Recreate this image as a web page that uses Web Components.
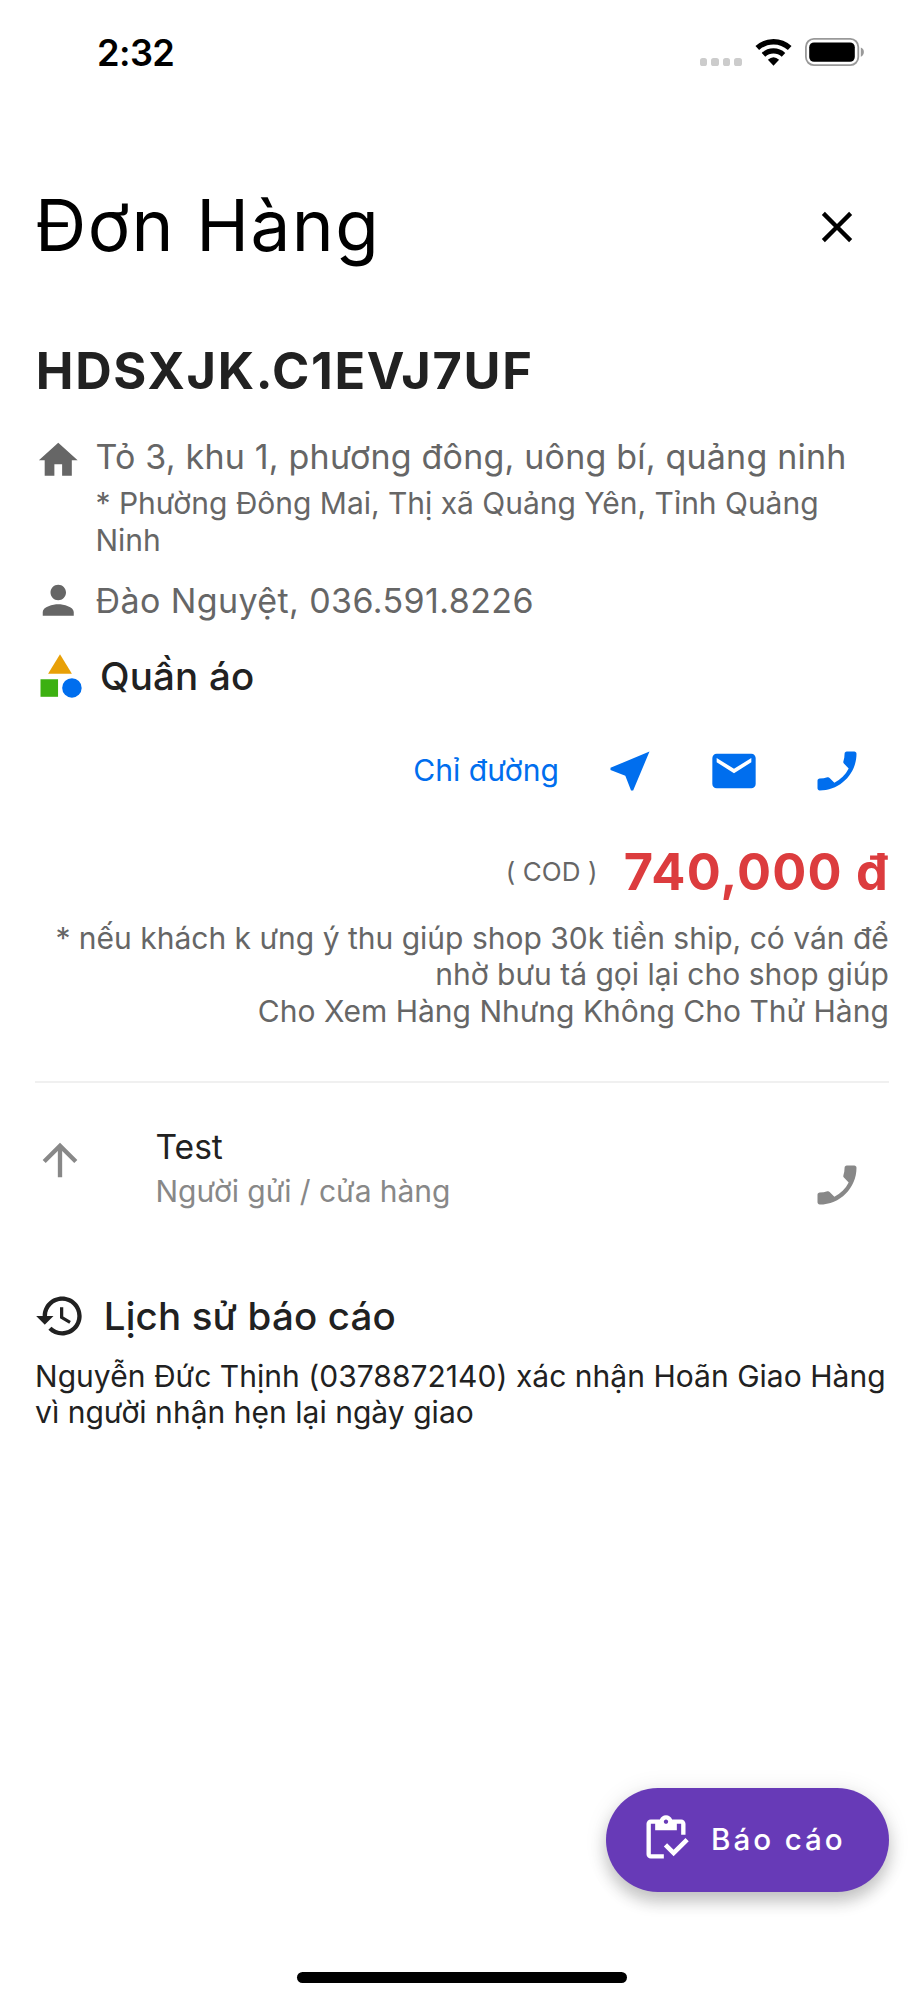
<!DOCTYPE html>
<html lang="vi">
<head>
<meta charset="utf-8">
<title>Đơn Hàng</title>
<style>
html, body { margin: 0; background: #fff; }
body { font-family: Inter, "Noto Sans", sans-serif; color: #212121; }
</style>
</head>
<body>
<order-screen></order-screen>

<script>
const ICONS = {
  close: '<path d="M19 6.41 17.59 5 12 10.59 6.41 5 5 6.41 10.59 12 5 17.59 6.41 19 12 13.41 17.59 19 19 17.59 13.41 12z"/>',
  home: '<path d="M10 20v-6h4v6h5v-8h3L12 3 2 12h3v8z"/>',
  person: '<path d="M12 12c2.21 0 4-1.79 4-4s-1.79-4-4-4-4 1.79-4 4 1.79 4 4 4zm0 2c-2.67 0-8 1.34-8 4v2h16v-2c0-2.66-5.33-4-8-4z"/>',
  category: '<path fill="#e8a007" d="m12 2-5.5 9h11z"/><path fill="#3cb011" d="M3 13.5h8.1v8.1H3z"/><circle fill="#006eee" cx="17.5" cy="17.5" r="4.5"/>',
  near: '<path d="M21 3 3 10.53v.98l6.84 2.65L12.48 21h.98L21 3z"/>',
  mail: '<path d="M20 4H4c-1.1 0-1.99.9-1.99 2L2 18c0 1.1.9 2 2 2h16c1.1 0 2-.9 2-2V6c0-1.1-.9-2-2-2zm0 4-8 5-8-5V6l8 5 8-5v2z"/>',
  phone: '<path transform="matrix(-1 0 0 1 24 0)" d="M6.62 10.79c1.44 2.83 3.76 5.14 6.59 6.59l2.2-2.2c.27-.27.67-.36 1.02-.24 1.12.37 2.33.57 3.57.57.55 0 1 .45 1 1V20c0 .55-.45 1-1 1-9.39 0-17-7.61-17-17 0-.55.45-1 1-1h3.5c.55 0 1 .45 1 1 0 1.25.2 2.45.57 3.57.11.35.03.74-.25 1.02l-2.2 2.2z"/>',
  up: '<path d="m4 12 1.41 1.41L11 7.83V20h2V7.83l5.58 5.59L20 12l-8-8-8 8z"/>',
  history: '<path d="M13 3c-4.97 0-9 4.03-9 9H1l3.89 3.89.07.14L9 12H6c0-3.87 3.13-7 7-7s7 3.13 7 7-3.13 7-7 7c-1.93 0-3.68-.79-4.94-2.06l-1.42 1.42C8.27 19.99 10.51 21 13 21c4.97 0 9-4.03 9-9s-4.03-9-9-9zm-1 5v5l4.28 2.54.72-1.21-3.5-2.08V8H12z"/>',
  inventory: '<path d="M5 5h2v3h10V5h2v5h2V5c0-1.1-.9-2-2-2h-4.18C14.4 1.84 13.3 1 12 1s-2.4.84-2.82 2H5c-1.1 0-2 .9-2 2v14c0 1.1.9 2 2 2h6v-2H5V5zm7-2c.55 0 1 .45 1 1s-.45 1-1 1-1-.45-1-1 .45-1 1-1z"/><path d="M21 11.5 15.51 17l-3.01-3L11 15.5l4.51 4.5L22.5 13z"/>'
};

const define = (name, render) => customElements.define(name, class extends HTMLElement {
  connectedCallback() {
    if (!this.shadowRoot) this.attachShadow({ mode: 'open' }).innerHTML = render(this);
  }
});

define('m-icon', el => `
<style>
:host { display: block; flex: none; width: var(--icon-size, 52px); height: var(--icon-size, 52px); }
svg { display: block; width: 100%; height: 100%; fill: currentColor; }
</style>
<svg viewBox="0 0 24 24" aria-hidden="true">${ICONS[el.getAttribute('name')]}</svg>`);

define('status-bar', () => `
<style>
:host { display: flex; justify-content: space-between; align-items: flex-start; box-sizing: border-box; height: 150px; padding: 32.7px 58.8px 0 97px; color: #000; }
time { font-size: 36.2px; font-weight: 600; line-height: 40px; letter-spacing: -.6px; }
.signs { display: flex; align-items: flex-end; height: 33.3px; }
.dots { display: flex; gap: 4.3px; }
.dots i { width: 7.3px; height: 7.6px; border-radius: 2.6px; background: #ccc; }
svg { display: block; }
.wifi { margin: 0 13px 0 13.5px; }
</style>
<time>2:32</time>
<div class="signs">
  <div class="dots"><i></i><i></i><i></i><i></i></div>
  <svg class="wifi" width="37" height="27" viewBox="0 0 37 27" fill="none" stroke="#000">
    <path stroke-width="5.4" d="M2.3 9A24 24 0 0 1 34.7 9"/>
    <path stroke-width="5.2" d="M8.5 15.8A14.8 14.8 0 0 1 28.5 15.8"/>
    <path fill="#000" stroke="none" d="M18.5 26.8 12.9 20.8Q18.5 15.6 24.1 20.8Z"/>
  </svg>
  <svg width="60" height="28" viewBox="0 0 60 28">
    <rect x=".9" y=".9" width="52.4" height="26.2" rx="8" fill="none" stroke="#999" stroke-width="1.8"/>
    <rect x="4.2" y="4.4" width="45.6" height="19.4" rx="4.8"/>
    <path fill="#999" d="M55.8 9.4Q58.9 10.8 58.9 14T55.8 18.8Z"/>
  </svg>
</div>`);

define('page-header', () => `
<style>
:host { display: flex; justify-content: space-between; align-items: center; height: 84px; margin-top: 34px; color: #000; }
h1 { margin: -2px 0 0; font-size: 71px; font-weight: 400; line-height: 84px; letter-spacing: 1.45px; }
m-icon { margin: 1.6px 26px 0 0; }
</style>
<h1><slot></slot></h1><m-icon name="close" role="button" aria-label="Đóng"></m-icon>`);

define('order-code', () => `
<style>
:host { display: block; margin-top: 72.6px; font-size: 50.5px; font-weight: 700; line-height: 60px; letter-spacing: 1.68px; padding-left: .8px; }
</style><slot></slot>`);

define('info-row', el => `
<style>
:host { display: flex; align-items: flex-start; color: #666; --icon-size: 46.5px; }
m-icon { margin-right: 14px; }
.main { font-size: 34px; line-height: 40px; letter-spacing: var(--track, .2px); padding-top: var(--shift, 0); }
.sub { margin-top: 8px; font-size: 30px; line-height: 36.7px; letter-spacing: -.02px; }
</style>
<m-icon name="${el.getAttribute('icon')}"></m-icon>
<div><div class="main"><slot></slot></div><div class="sub"><slot name="sub"></slot></div></div>`);

define('section-title', el => `
<style>
:host { display: flex; align-items: center; height: 52px; font-size: 38.5px; font-weight: 500; line-height: 52px; letter-spacing: .17px; }
m-icon { margin: 0 var(--gap, 13.6px) 0 -.6px; }
</style>
<m-icon name="${el.getAttribute('icon')}"></m-icon><span><slot></slot></span>`);

define('action-bar', () => `
<style>
:host { display: flex; justify-content: flex-end; align-items: center; height: 52px; padding-right: 26px; color: #006eee; gap: 51.5px; }
span { font-size: 30.1px; line-height: 40px; margin: 0 -6.5px 2px 0; }
</style>
<span>Chỉ đường</span>
<m-icon name="near"></m-icon><m-icon name="mail"></m-icon><m-icon name="phone"></m-icon>`);

define('cod-amount', () => `
<style>
:host { display: flex; justify-content: flex-end; align-items: center; height: 60px; line-height: 60px; }
span { font-size: 26px; color: #666; letter-spacing: .1px; margin: 1px 26px 0 0; }
b { font-size: 50.5px; font-weight: 700; color: #dc3c3e; letter-spacing: 1.2px; margin: 1px 0 0; }
</style>
<span>( COD )</span><b><slot></slot></b>`);

define('order-note', () => `
<style>
:host { display: block; text-align: right; color: #666; font-size: 30px; line-height: 36.8px; letter-spacing: 0; padding-right: .2px; }
</style><slot></slot>`);

define('sender-tile', () => `
<style>
:host { display: flex; height: 84px; color: #888; }
.up { margin: 8px 0 0 -.6px; }
.text { flex: 1; margin-left: 69.1px; }
.name { font-size: 33.6px; line-height: 40px; color: #212121; letter-spacing: 0; padding-top: 1px; }
.role { margin-top: 5.3px; font-size: 30px; line-height: 36.8px; letter-spacing: -.05px; }
.call { margin: 33px 26px 0 0; }
</style>
<m-icon class="up" name="up"></m-icon>
<div class="text"><div class="name"><slot></slot></div><div class="role"><slot name="role"></slot></div></div>
<m-icon class="call" name="phone"></m-icon>`);

define('report-fab', () => `
<style>
:host { display: flex; align-items: center; box-sizing: border-box; width: 283px; height: 104px; padding-left: 34px; border-radius: 52px; background: #673ab7; color: #fff; box-shadow: 0 10px 16px rgba(0,0,0,.2), 0 2px 24px rgba(0,0,0,.09); font-size: 29.6px; font-weight: 500; line-height: 52px; letter-spacing: 2.9px; }
m-icon { margin: 0 19px 1px 0; }
span { margin-bottom: 1px; }
</style>
<m-icon name="inventory"></m-icon><span><slot></slot></span>`);

define('order-screen', () => `
<style>
:host { display: flex; flex-direction: column; width: 924px; height: 2000px; overflow: hidden; background: #fff; }
main { padding: 0 35px; }
.address { margin-top: 36.4px; height: 121.4px; }
.person { margin-top: 18.8px; height: 46.5px; --shift: 3.4px; --track: .4px; }
.goods { margin-top: 26.6px; }
action-bar { margin-top: 43px; }
cod-amount { margin-top: 44px; }
order-note { margin-top: 18.4px; }
hr { height: 2px; margin: 50.8px 0 0; border: 0; background: #f0f0f0; }
sender-tile { margin-top: 43.4px; }
.history { margin-top: 79.3px; --gap: 17.3px; }
p { margin: 16.2px -10px 0 0; font-size: 30px; line-height: 36.6px; letter-spacing: .03px; }
footer { display: flex; flex-direction: column; align-items: flex-end; margin-top: auto; padding: 0 34.9px 17.3px; }
.bar { align-self: center; width: 330.5px; height: 11px; margin-top: 79.9px; border-radius: 6px; background: #000; }
</style>
<status-bar></status-bar>
<main>
  <page-header>Đơn Hàng</page-header>
  <order-code>HDSXJK.C1EVJ7UF</order-code>
  <info-row class="address" icon="home">Tỏ 3, khu 1, phương đông, uông bí, quảng ninh<span slot="sub">* Phường Đông Mai, Thị xã Quảng Yên, Tỉnh Quảng<br>Ninh</span></info-row>
  <info-row class="person" icon="person">Đào Nguyệt, 036.591.8226</info-row>
  <section-title class="goods" icon="category">Quần áo</section-title>
  <action-bar></action-bar>
  <cod-amount>740,000 đ</cod-amount>
  <order-note>* nếu khách k ưng ý thu giúp shop 30k tiền ship, có ván để<br>nhờ bưu tá gọi lại cho shop giúp<br>Cho Xem Hàng Nhưng Không Cho Thử Hàng</order-note>
  <hr>
  <sender-tile>Test<span slot="role">Người gửi / cửa hàng</span></sender-tile>
  <section-title class="history" icon="history">Lịch sử báo cáo</section-title>
  <p>Nguyễn Đức Thịnh (0378872140) xác nhận Hoãn Giao Hàng<br>vì người nhận hẹn lại ngày giao</p>
</main>
<footer>
  <report-fab role="button">Báo cáo</report-fab>
  <div class="bar"></div>
</footer>`);
</script>
</body>
</html>
